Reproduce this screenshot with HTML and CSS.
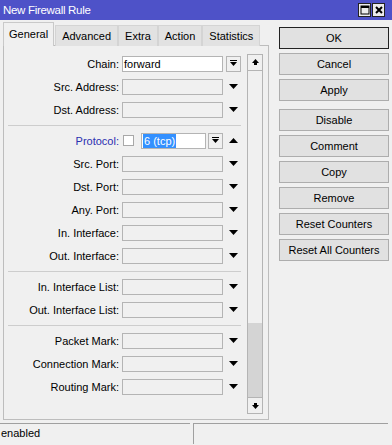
FILE: index.html
```html
<!DOCTYPE html>
<html lang="en">
<head>
    <meta charset="UTF-8">
    <meta name="viewport" content="width=device-width, initial-scale=1.0">
    <title>New Firewall Rule</title>
    <link rel="stylesheet" href="styles.css">
</head>
<body>
    <!-- Title bar -->
    <div class="titlebar">
        <span class="title">New Firewall Rule</span>
        <div class="title-btns">
            <div class="title-btn">
                <svg width="10" height="10" viewBox="0 0 10 10"><rect x="1" y="1" width="8" height="8" fill="none" stroke="#000" stroke-width="1"/><rect x="1" y="1" width="8" height="2" fill="#000"/></svg>
            </div>
            <div class="title-btn">
                <svg width="10" height="10" viewBox="0 0 10 10"><path d="M2 2 L8 8 M8 2 L2 8" stroke="#000" stroke-width="2"/></svg>
            </div>
        </div>
    </div>

    <div class="window">
        <div class="left">
            <div class="tabs">
                <div class="tab active">General</div>
                <div class="tab">Advanced</div>
                <div class="tab">Extra</div>
                <div class="tab">Action</div>
                <div class="tab">Statistics</div>
            </div>

            <div class="panel">
                <div class="form">
                    <div class="row">
                        <label>Chain:</label>
                        <div class="field white">forward</div>
                        <div class="arrow-col"><div class="drop-btn"><svg width="7" height="7" viewBox="0 0 7 7"><rect x="0" y="0" width="7" height="1" fill="#000"/><polygon points="0,2 7,2 3.5,6" fill="#000"/></svg></div></div>
                    </div>
                    <div class="row">
                        <label>Src. Address:</label>
                        <div class="field"></div>
                        <div class="arrow-col"><svg width="9" height="5" viewBox="0 0 9 5"><polygon points="0,0 9,0 4.5,5" fill="#000"/></svg></div>
                    </div>
                    <div class="row">
                        <label>Dst. Address:</label>
                        <div class="field"></div>
                        <div class="arrow-col"><svg width="9" height="5" viewBox="0 0 9 5"><polygon points="0,0 9,0 4.5,5" fill="#000"/></svg></div>
                    </div>

                    <div class="sep"></div>

                    <div class="row">
                        <label class="blue">Protocol:</label>
                        <div class="field-group">
                            <div class="check"></div>
                            <div class="field white short"><span class="selected">6 (tcp)</span></div>
                            <div class="drop-btn"><svg width="7" height="7" viewBox="0 0 7 7"><rect x="0" y="0" width="7" height="1" fill="#000"/><polygon points="0,2 7,2 3.5,6" fill="#000"/></svg></div>
                        </div>
                        <div class="arrow-col"><svg width="9" height="5" viewBox="0 0 9 5"><polygon points="0,5 9,5 4.5,0" fill="#000"/></svg></div>
                    </div>
                    <div class="row">
                        <label>Src. Port:</label>
                        <div class="field"></div>
                        <div class="arrow-col"><svg width="9" height="5" viewBox="0 0 9 5"><polygon points="0,0 9,0 4.5,5" fill="#000"/></svg></div>
                    </div>
                    <div class="row">
                        <label>Dst. Port:</label>
                        <div class="field"></div>
                        <div class="arrow-col"><svg width="9" height="5" viewBox="0 0 9 5"><polygon points="0,0 9,0 4.5,5" fill="#000"/></svg></div>
                    </div>
                    <div class="row">
                        <label>Any. Port:</label>
                        <div class="field"></div>
                        <div class="arrow-col"><svg width="9" height="5" viewBox="0 0 9 5"><polygon points="0,0 9,0 4.5,5" fill="#000"/></svg></div>
                    </div>
                    <div class="row">
                        <label>In. Interface:</label>
                        <div class="field"></div>
                        <div class="arrow-col"><svg width="9" height="5" viewBox="0 0 9 5"><polygon points="0,0 9,0 4.5,5" fill="#000"/></svg></div>
                    </div>
                    <div class="row">
                        <label>Out. Interface:</label>
                        <div class="field"></div>
                        <div class="arrow-col"><svg width="9" height="5" viewBox="0 0 9 5"><polygon points="0,0 9,0 4.5,5" fill="#000"/></svg></div>
                    </div>

                    <div class="sep"></div>

                    <div class="row">
                        <label>In. Interface List:</label>
                        <div class="field"></div>
                        <div class="arrow-col"><svg width="9" height="5" viewBox="0 0 9 5"><polygon points="0,0 9,0 4.5,5" fill="#000"/></svg></div>
                    </div>
                    <div class="row">
                        <label>Out. Interface List:</label>
                        <div class="field"></div>
                        <div class="arrow-col"><svg width="9" height="5" viewBox="0 0 9 5"><polygon points="0,0 9,0 4.5,5" fill="#000"/></svg></div>
                    </div>

                    <div class="sep"></div>

                    <div class="row">
                        <label>Packet Mark:</label>
                        <div class="field"></div>
                        <div class="arrow-col"><svg width="9" height="5" viewBox="0 0 9 5"><polygon points="0,0 9,0 4.5,5" fill="#000"/></svg></div>
                    </div>
                    <div class="row">
                        <label>Connection Mark:</label>
                        <div class="field"></div>
                        <div class="arrow-col"><svg width="9" height="5" viewBox="0 0 9 5"><polygon points="0,0 9,0 4.5,5" fill="#000"/></svg></div>
                    </div>
                    <div class="row">
                        <label>Routing Mark:</label>
                        <div class="field"></div>
                        <div class="arrow-col"><svg width="9" height="5" viewBox="0 0 9 5"><polygon points="0,0 9,0 4.5,5" fill="#000"/></svg></div>
                    </div>
                </div>

                <!-- Scrollbar -->
                <div class="scrollbar">
                    <div class="sb-btn"><svg width="7" height="7" viewBox="0 0 7 7"><polygon points="0,4 7,4 3.5,0" fill="#000"/><rect x="2" y="4" width="3" height="2" fill="#000"/></svg></div>
                    <div class="sb-track"><div class="sb-thumb"></div></div>
                    <div class="sb-btn"><svg width="7" height="7" viewBox="0 0 7 7"><rect x="2" y="1" width="3" height="2" fill="#000"/><polygon points="0,3 7,3 3.5,7" fill="#000"/></svg></div>
                </div>
            </div>
        </div>

        <div class="buttons">
            <div class="btn default">OK</div>
            <div class="btn">Cancel</div>
            <div class="btn">Apply</div>
            <div class="btn spaced">Disable</div>
            <div class="btn">Comment</div>
            <div class="btn">Copy</div>
            <div class="btn">Remove</div>
            <div class="btn">Reset Counters</div>
            <div class="btn">Reset All Counters</div>
        </div>
    </div>

    <!-- Status bar -->
    <div class="statusbar">
        <div class="status-cell left-cell">enabled</div>
        <div class="status-cell right-cell"></div>
    </div>
</body>
</html>
```

FILE: styles.css
```css
body {
    font-family: "Liberation Sans", Arial, sans-serif;
    font-size: 11px;
    margin: 0;
    padding: 0;
    width: 392px;
    height: 445px;
    overflow: hidden;
    background-color: #f0f0f0;
    color: #000;
}
.titlebar {
    height: 20px;
    background: #4e52c8;
    display: flex;
    align-items: center;
    justify-content: space-between;
    padding: 0 7px 0 3px;
}
.title {
    color: #fff;
    font-size: 11.5px;
    letter-spacing: -0.3px;
}
.title-btns {
    display: flex;
    gap: 1px;
}
.title-btn {
    width: 13px;
    height: 14px;
    box-sizing: border-box;
    border: 1px solid #222;
    background: #ececec;
    display: flex;
    align-items: center;
    justify-content: center;
}
.window {
    display: flex;
    padding: 3px 0 0 3px;
    gap: 10px;
}
.left {
    width: 266px;
}
.tabs {
    display: flex;
    align-items: flex-end;
    height: 23px;
    margin-bottom: -1px;
}
.tab {
    height: 21px;
    line-height: 20px;
    box-sizing: border-box;
    padding: 0 6px;
    border: 1px solid #d4d4d4;
    border-bottom: none;
    background: #e2e2e2;
}
.tab.active {
    height: 24px;
    line-height: 23px;
    padding: 0 5px;
    margin-right: 1px;
    background: #f0f0f0;
    border-color: #c9c9c9;
    position: relative;
    z-index: 1;
}
.panel {
    display: flex;
    height: 375px;
    box-sizing: border-box;
    border: 1px solid #bdbdbd;
}
.form {
    padding-top: 6px;
}
.row {
    display: flex;
    align-items: center;
    height: 23px;
}
.row label {
    width: 115px;
    margin-right: 3px;
    text-align: right;
    white-space: nowrap;
}
.row label.blue {
    color: #2b2fb0;
}
.field {
    width: 101px;
    height: 16px;
    box-sizing: border-box;
    border: 1px solid #b4b4b4;
    background: #f0f0f0;
    line-height: 14px;
    padding-left: 1px;
    overflow: hidden;
}
.field.white {
    background: #fff;
}
.field.short {
    width: 65px;
    margin-left: 7px;
    padding-left: 1px;
}
.field-group {
    width: 101px;
    display: flex;
    align-items: center;
}
.check {
    width: 11px;
    height: 11px;
    box-sizing: border-box;
    margin-left: 1px;
    border: 1px solid #a8a8a8;
    background: #fff;
}
.selected {
    display: inline-block;
    height: 14px;
    padding: 0 1px;
    background: #3390ff;
    color: #fff;
}
.drop-btn {
    width: 15px;
    height: 16px;
    box-sizing: border-box;
    border: 1px solid #b4b4b4;
    background: #f0f0f0;
    display: flex;
    align-items: center;
    justify-content: center;
}
.field-group .drop-btn {
    margin-left: 2px;
}
.arrow-col {
    width: 15px;
    margin-left: 3px;
    display: flex;
    align-items: center;
    justify-content: center;
}
.sep {
    height: 1px;
    background: #cdcdcd;
    margin: 4px 0 3px 4px;
}
.scrollbar {
    width: 16px;
    margin: 8px 0 5px 6px;
    display: flex;
    flex-direction: column;
}
.sb-btn {
    height: 17px;
    box-sizing: border-box;
    border: 1px solid #b4b4b4;
    background: #f0f0f0;
    display: flex;
    align-items: center;
    justify-content: center;
}
.sb-track {
    flex: 1;
    border-left: 1px solid #b4b4b4;
    border-right: 1px solid #b4b4b4;
    display: flex;
    flex-direction: column;
}
.sb-thumb {
    margin-top: auto;
    height: 74px;
    background: #d4d4d4;
}
.buttons {
    width: 110px;
    padding-top: 4px;
}
.btn {
    height: 22px;
    line-height: 20px;
    box-sizing: border-box;
    border: 1px solid #adadad;
    background: #e1e1e1;
    text-align: center;
    margin-bottom: 4px;
}
.btn.default {
    border-color: #222;
}
.btn.spaced {
    margin-top: 8px;
}
.statusbar {
    display: flex;
    margin-top: 3px;
    height: 21px;
    gap: 3px;
}
.status-cell {
    box-sizing: border-box;
    border-top: 1px solid #a0a0a0;
    line-height: 18px;
}
.left-cell {
    width: 190px;
    padding-left: 1px;
}
.right-cell {
    width: 195px;
    border-left: 1px solid #a0a0a0;
}
```
